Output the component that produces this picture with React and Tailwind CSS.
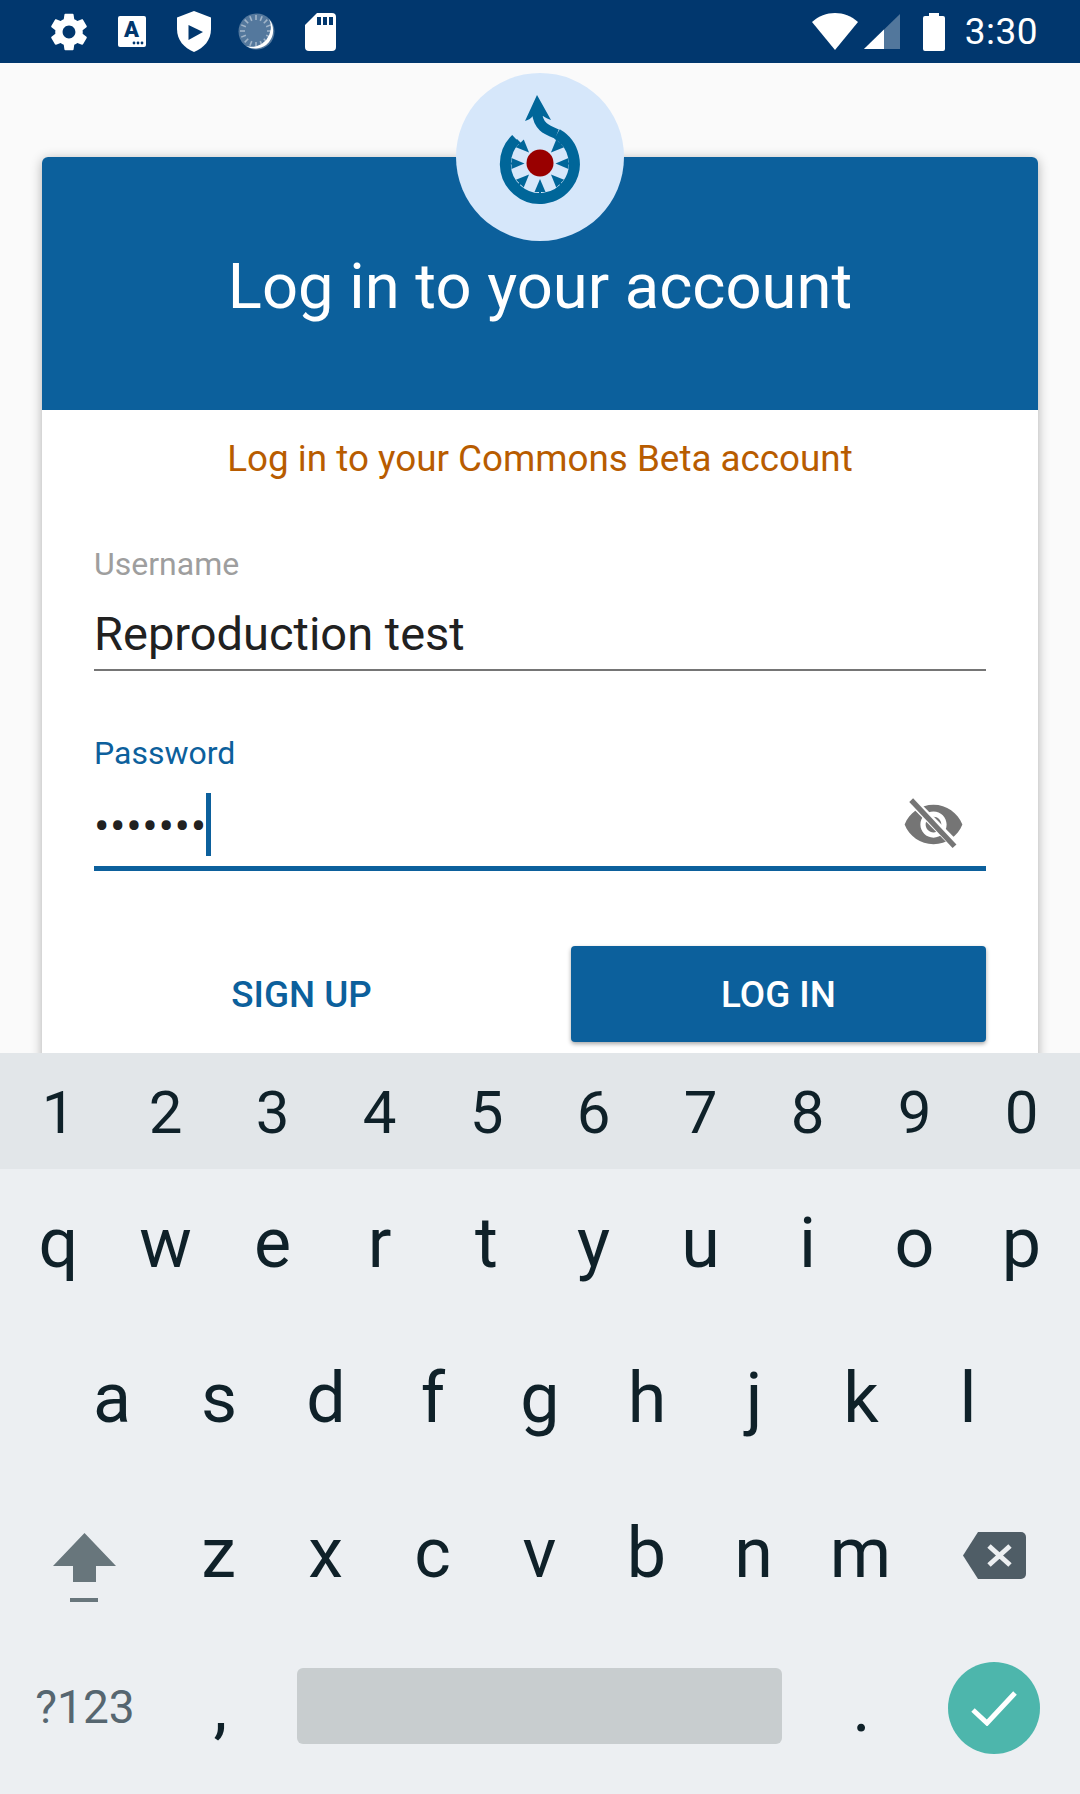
import React from 'react';

const Gear = () => (
  <svg width="44" height="44" viewBox="0 0 24 24" fill="#fff">
    <path d="M19.43 12.98c.04-.32.07-.64.07-.98s-.03-.66-.07-.98l2.11-1.65c.19-.15.24-.42.12-.64l-2-3.46c-.12-.22-.39-.3-.61-.22l-2.49 1c-.52-.4-1.08-.73-1.69-.98l-.38-2.65C14.46 2.18 14.25 2 14 2h-4c-.25 0-.46.18-.49.42l-.38 2.65c-.61.25-1.17.59-1.69.98l-2.49-1c-.23-.09-.49 0-.61.22l-2 3.46c-.13.22-.07.49.12.64l2.11 1.65c-.04.32-.07.65-.07.98s.03.66.07.98l-2.11 1.65c-.19.15-.24.42-.12.64l2 3.46c.12.22.39.3.61.22l2.49-1c.52.4 1.08.73 1.69.98l.38 2.65c.03.24.24.42.49.42h4c.25 0 .46-.18.49-.42l.38-2.65c.61-.25 1.17-.59 1.69-.98l2.49 1c.23.09.49 0 .61-.22l2-3.46c.12-.22.07-.49-.12-.64l-2.11-1.65zM12 15.5c-1.93 0-3.5-1.57-3.5-3.5s1.57-3.5 3.5-3.5 3.5 1.57 3.5 3.5-1.57 3.5-3.5 3.5z" />
  </svg>
);

const KeyboardA = () => (
  <svg width="28" height="31" viewBox="0 0 28 31">
    <rect width="28" height="31" rx="2" fill="#fff" />
    <text x="13.5" y="21" textAnchor="middle" fontFamily="Roboto" fontWeight="900" fontSize="22" fill="#01376e">A</text>
    <circle cx="16" cy="27" r="1.4" fill="#01376e" />
    <circle cx="20" cy="27" r="1.4" fill="#01376e" />
    <circle cx="24" cy="27" r="1.4" fill="#01376e" />
  </svg>
);

const Shield = () => (
  <svg width="34" height="41" viewBox="0 0 34 41">
    <path d="M17 0 L34 6.5 V18 C34 29 27 37 17 41 C7 37 0 29 0 18 V6.5 Z" fill="#fff" />
    <path d="M11.5 14 L26 21 L11.5 29 Z" fill="#01376e" />
  </svg>
);

const Spinner = () => (
  <svg width="38" height="38" viewBox="0 0 38 38">
    <circle cx="18.500" cy="18.500" r="18" fill="#fff" fillOpacity="0.33" />
    <path d="M31 6 A18 18 0 0 1 8 33 A19.500 19.500 0 0 0 31 6 Z" fill="#fff" />
    <g stroke="#fff" strokeOpacity="0.45" strokeWidth="1.6">
      {Array.from({ length: 16 }).map((_, i) => (
        <line key={i} x1="18" y1="2" x2="18" y2="7" transform={`rotate(${i * 22.5} 18 18)`} />
      ))}
    </g>
  </svg>
);

const SdCard = () => (
  <svg width="31" height="38" viewBox="0 0 31 38">
    <path d="M12 0 H27 A4 4 0 0 1 31 4 V34 A4 4 0 0 1 27 38 H4 A4 4 0 0 1 0 34 V12 Z" fill="#fff" />
    <rect x="12" y="4" width="4" height="8" fill="#01376e" />
    <rect x="18" y="4" width="4" height="8" fill="#01376e" />
    <rect x="24" y="4" width="4" height="8" fill="#01376e" />
  </svg>
);

const Wifi = () => (
  <svg width="46" height="37" viewBox="0 0 46 37">
    <path d="M0 9 C13 -3 33 -3 46 9 L23 37 Z" fill="#fff" />
  </svg>
);

const Signal = () => (
  <svg width="36" height="36" viewBox="0 0 36 36">
    <path d="M36 0 V35 H0 Z" fill="#fff" fillOpacity="0.32" />
    <path d="M20 15.500 V35 H0 Z" fill="#fff" />
  </svg>
);

const Battery = () => (
  <svg width="22" height="38" viewBox="0 0 22 38">
    <path d="M6 0 H16 V3 H20 A2 2 0 0 1 22 5 V36 A2 2 0 0 1 20 38 H2 A2 2 0 0 1 0 36 V5 A2 2 0 0 1 2 3 H6 Z" fill="#fff" />
  </svg>
);

const StatusBar = () => (
  <div className="h-[63px] bg-[#01376e] flex items-center text-white shrink-0">
    <div className="flex items-center pl-[47px]">
      <Gear />
      <div className="ml-[27px]"><KeyboardA /></div>
      <div className="ml-[31px]"><Shield /></div>
      <div className="ml-[27px]"><Spinner /></div>
      <div className="ml-[29px]"><SdCard /></div>
    </div>
    <div className="flex items-center ml-auto pr-[42px]">
      <Wifi />
      <div className="ml-[6px]"><Signal /></div>
      <div className="ml-[23px]"><Battery /></div>
      <span className="ml-[20px] text-[37px] leading-[63px] tracking-[0.5px]">3:30</span>
    </div>
  </div>
);

const Logo = () => (
  <svg className="shrink-0" width="200" height="190" viewBox="0 2 200 190">
    <g fill="none" stroke="#006699">
      <path d="M76 79 A34.500 34.500 0 1 0 117 74" strokeWidth="11" />
      <path d="M117 74 C107 70 98 67 97 52" strokeWidth="10" />
    </g>
    <path d="M97 35 L111 60 C107 59 105 57 103 56 L93 56 C91 58 89 60 85 61 Z" fill="#006699" />
    <circle cx="100" cy="103" r="13.500" fill="#990000" />
    {[90, 135, 180, 225, 270, 315, 45].map((a) => (
      <g key={a} transform={`rotate(${a} 100 103.500)`} fill="#006699">
        <path d="M100 88 L94.500 75 H105.500 Z" />
        <rect x="99" y="70" width="2" height="6" />
      </g>
    ))}
  </svg>
);

const EyeOff = () => (
  <svg width="63" height="63" viewBox="0 0 24 24">
    <path fill="#757575" fillRule="evenodd" d="M12 4.500C7 4.500 2.730 7.610 1 12c1.730 4.390 6 7.500 11 7.500s9.270-3.110 11-7.500c-1.730-4.390-6-7.500-11-7.500zM12 17c-2.760 0-5-2.240-5-5s2.240-5 5-5 5 2.240 5 5-2.240 5-5 5zm0-8c-1.660 0-3 1.340-3 3s1.340 3 3 3 3-1.340 3-3-1.340-3-3-3z" />
    <line x1="5" y1="4.200" x2="20" y2="19.500" stroke="#fff" strokeWidth="3.400" />
    <line x1="3.500" y1="2.700" x2="20" y2="20.300" stroke="#757575" strokeWidth="2" />
  </svg>
);

const Shift = () => (
  <div className="flex flex-col items-center">
    <svg width="63" height="49" viewBox="0 0 63 49">
      <path d="M31.500 0 L63 33 H43 V49 H20 V33 H0 Z" fill="#68767c" />
    </svg>
    <div className="w-[28px] h-[4px] bg-[#68767c] mt-[16px]" />
  </div>
);

const Backspace = () => (
  <svg width="63" height="47" viewBox="0 0 63 47">
    <path d="M15 0 H58 A5 5 0 0 1 63 5 V42 A5 5 0 0 1 58 47 H15 L0 23.500 Z" fill="#4f5d66" />
    <path d="M26 14 L47 33 M47 14 L26 33" stroke="#eceff1" strokeWidth="5" />
  </svg>
);

const Key = ({ children, className = 'w-[107px]' }) => (
  <div className={`${className} flex items-center justify-center`}>{children}</div>
);

const Keyboard = () => (
  <div className="shrink-0 bg-[#eceff2] text-[#0f2129]">
    <div className="h-[116px] bg-[#e2e6e9] flex justify-center pt-[4px] text-[60px]">
      {['1', '2', '3', '4', '5', '6', '7', '8', '9', '0'].map((k) => <Key key={k}>{k}</Key>)}
    </div>
    <div className="h-[155px] flex justify-center pb-[6px] text-[70px]">
      {['q', 'w', 'e', 'r', 't', 'y', 'u', 'i', 'o', 'p'].map((k) => <Key key={k}>{k}</Key>)}
    </div>
    <div className="h-[155px] flex justify-center pb-[6px] text-[70px]">
      {['a', 's', 'd', 'f', 'g', 'h', 'j', 'k', 'l'].map((k) => <Key key={k}>{k}</Key>)}
    </div>
    <div className="h-[155px] flex px-[3px] pb-[6px] text-[70px]">
      <Key className="w-[162px] pt-[28px]"><Shift /></Key>
      {['z', 'x', 'c', 'v', 'b', 'n', 'm'].map((k) => <Key key={k}>{k}</Key>)}
      <div className="flex-1 flex items-center justify-end pt-[4px] pr-[51px]"><Backspace /></div>
    </div>
    <div className="h-[160px] flex items-center px-[3px] pb-[13px]">
      <Key className="w-[164px] text-[46px] text-[#566670]">?123</Key>
      <Key className="w-[107px] text-[70px]">,</Key>
      <div className="ml-[23px] -mt-[4px] w-[485px] h-[76px] rounded-[6px] bg-[#c8cdcf]" />
      <Key className="ml-[26px] w-[107px] text-[70px]">.</Key>
      <div className="ml-[33px] w-[92px] h-[92px] rounded-full bg-[#4db6ac] flex items-center justify-center">
        <svg width="46" height="36" viewBox="0 0 46 36">
          <path d="M2 20 L16 33 L44 3" fill="none" stroke="#fff" strokeWidth="5" />
        </svg>
      </div>
    </div>
  </div>
);

const App = () => (
  <div className="w-[1080px] h-[1794px] flex flex-col overflow-hidden bg-[#fafafa] font-[Roboto,sans-serif]">
    <StatusBar />
    <div className="relative flex-1 overflow-hidden px-[42px] pt-[94px]">
      <div className="absolute left-[456px] top-[10px] w-[168px] h-[168px] rounded-full bg-[#d6e7fa] z-10 flex items-center justify-center">
        <Logo />
      </div>
      <div className="h-[1000px] bg-white rounded-t-[6px] shadow-[0_2px_12px_rgba(0,0,0,0.3)]">
        <div className="h-[253px] rounded-t-[6px] bg-[#0c609c] pt-[91px] text-center text-white text-[63.3px] leading-[76px]">
          Log in to your account
        </div>
        <div className="px-[52px]">
          <div className="h-[98px] flex items-center justify-center text-[36.8px] text-[#b85c00]">
            Log in to your Commons Beta account
          </div>
          <div className="mt-[36px] text-[32px] leading-[40px] text-[#9e9e9e]">Username</div>
          <div className="mt-[22px] h-[56px] text-[47px] leading-[56px] text-[#212121]">Reproduction test</div>
          <div className="mt-[7px] h-[2px] bg-[#757575]" />
          <div className="mt-[62px] text-[32px] leading-[40px] text-[#0c609c]">Password</div>
          <div className="mt-[20px] h-[78px] flex items-start border-b-[5px] border-[#0c609c]">
            <span className="text-[46px] leading-[66px] text-[#212121] tracking-[0.6px]">•••••••</span>
            <span className="-ml-[1px] w-[5px] h-[63px] bg-[#0c609c]" />
            <span className="ml-auto mr-[21px]"><EyeOff /></span>
          </div>
          <div className="mt-[75px] flex items-center gap-[62px]">
            <button className="w-[415px] h-[96px] pt-[2px] text-[36.8px] font-medium uppercase text-[#0c609c]">Sign up</button>
            <button className="flex-1 h-[96px] pt-[2px] rounded-[4px] bg-[#0c609c] text-[36.8px] font-medium uppercase text-white shadow-[0_2px_4px_rgba(0,0,0,0.35)]">Log in</button>
          </div>
        </div>
      </div>
    </div>
    <Keyboard />
  </div>
);

export default App;
